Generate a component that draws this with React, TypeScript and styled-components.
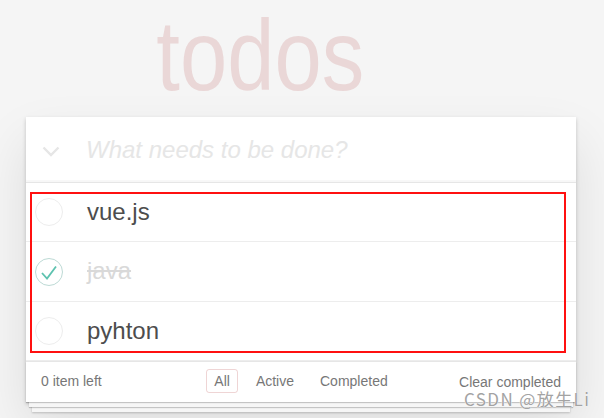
import React, { useState } from "react";
import styled, { createGlobalStyle } from "styled-components";

const GlobalStyle = createGlobalStyle`
  html, body {
    margin: 0;
    padding: 0;
    background: #f5f5f5;
    font-family: "Liberation Sans", Arial, sans-serif;
    color: #4d4d4d;
  }
`;

const Page = styled.div`
  position: relative;
  width: 604px;
  height: 418px;
  overflow: hidden;
`;

const Wrapper = styled.section`
  width: 550px;
  margin-left: 26px;
`;

const Title = styled.h1`
  margin: 0;
  padding: 5px 82px 0 0;
  height: 117px;
  box-sizing: border-box;
  text-align: center;
  font-size: 100px;
  line-height: 100px;
  font-weight: 100;
  color: rgba(175, 47, 47, 0.15);

  span {
    display: inline-block;
    transform: scaleX(0.85);
    transform-origin: center;
  }
`;

const Card = styled.div`
  position: relative;
  isolation: isolate;
  background: #fff;
  box-shadow: 0 2px 4px 0 rgba(0, 0, 0, 0.2), 0 25px 50px 0 rgba(0, 0, 0, 0.1);
`;

const Header = styled.header`
  position: relative;
  display: flex;
  align-items: center;
  height: 65px;
  box-shadow: inset 0 -2px 1px rgba(0, 0, 0, 0.03);
`;

const ToggleAll = styled.div`
  width: 60px;
  display: flex;
  padding: 3px 0 0 16px;
  box-sizing: border-box;
`;

const NewTodo = styled.input`
  flex: 1;
  border: none;
  outline: none;
  background: transparent;
  padding: 0 16px 0 0;
  font-family: "Liberation Sans", Arial, sans-serif;
  font-size: 24px;
  line-height: 1.4em;
  color: #4d4d4d;

  &::placeholder {
    font-style: italic;
    color: #e6e6e6;
  }
`;

const Main = styled.section`
  position: relative;
  border-top: 1px solid #e6e6e6;
`;

const List = styled.ul`
  margin: 0;
  padding: 0;
  list-style: none;
`;

const Item = styled.li`
  display: flex;
  align-items: center;
  height: 58.4px;
  border-bottom: 1px solid #ededed;
`;

const Toggle = styled.div`
  width: 61px;
  display: flex;
  align-items: center;
  padding-left: 8px;
  box-sizing: border-box;
`;

const Label = styled.label<{ $done: boolean }>`
  font-size: 24px;
  line-height: 1.2;
  color: ${(p) => (p.$done ? "#d9d9d9" : "#4d4d4d")};
  text-decoration: ${(p) => (p.$done ? "line-through" : "none")};
`;

const Annotation = styled.div`
  position: absolute;
  left: 4px;
  top: 9px;
  width: 536px;
  height: 161px;
  box-sizing: border-box;
  border: 2px solid #ff1010;
  pointer-events: none;
`;

const Footer = styled.footer`
  position: relative;
  display: flex;
  align-items: center;
  height: 40px;
  padding: 0 15px;
  font-size: 14px;
  color: #777;
  border-top: 1px solid #e6e6e6;

  &::before {
    content: "";
    position: absolute;
    left: 0;
    right: 0;
    bottom: 0;
    height: 40px;
    z-index: -1;
    box-shadow: 0 1px 1px rgba(0, 0, 0, 0.2), 0 8px 0 -3px #f6f6f6,
      0 9px 1px -3px rgba(0, 0, 0, 0.2), 0 16px 0 -6px #f6f6f6,
      0 17px 2px -6px rgba(0, 0, 0, 0.2);
  }
`;

const Count = styled.span`
  flex: 1;
  padding-bottom: 2px;
`;

const Filters = styled.ul`
  display: flex;
  margin: 0 0 2px;
  padding: 0;
  list-style: none;
`;

const Filter = styled.li<{ $selected: boolean }>`
  margin: 0 5px;
  padding: 3px 7px;
  line-height: 16px;
  border: 1px solid ${(p) => (p.$selected ? "rgba(175, 47, 47, 0.2)" : "transparent")};
  border-radius: 3px;
`;

const Clear = styled.span`
  flex: 1;
  text-align: right;
`;

const Watermark = styled.div`
  position: absolute;
  left: 464px;
  top: 388px;
  font-family: "Noto Sans CJK SC", "Liberation Sans", sans-serif;
  font-size: 17px;
  line-height: 22px;
  letter-spacing: 1.4px;
  color: #a3a3a3;
  text-shadow: 0 0 1px #fff, 0 0 1px #fff;
  white-space: nowrap;
`;

const Circle = ({ done }: { done: boolean }) => (
  <svg width="30" height="30" viewBox="0 0 30 30">
    <circle cx="15" cy="15" r="13.5" fill="none" stroke={done ? "#bddad5" : "#ededed"} strokeWidth="1" />
    {done && (
      <polyline points="8,16 13,21.5 22,9.5" fill="none" stroke="#5dc2af" strokeWidth="1.8" />
    )}
  </svg>
);

const todos = [
  { title: "vue.js", done: false },
  { title: "java", done: true },
  { title: "pyhton", done: false },
];

export default function App() {
  const [text, setText] = useState("");
  return (
    <Page>
      <GlobalStyle />
      <Wrapper>
        <Title>
          <span>todos</span>
        </Title>
        <Card>
          <Header>
            <ToggleAll>
              <svg width="18" height="11" viewBox="0 0 18 11">
                <polyline points="1.5,1.5 9,9 16.5,1.5" fill="none" stroke="#e6e6e6" strokeWidth="2.4" />
              </svg>
            </ToggleAll>
            <NewTodo
              placeholder="What needs to be done?"
              value={text}
              onChange={(e) => setText(e.target.value)}
            />
          </Header>
          <Main>
            <List>
              {todos.map((t) => (
                <Item key={t.title}>
                  <Toggle>
                    <Circle done={t.done} />
                  </Toggle>
                  <Label $done={t.done}>{t.title}</Label>
                </Item>
              ))}
            </List>
            <Annotation />
          </Main>
          <Footer>
            <Count>0 item left</Count>
            <Filters>
              <Filter $selected>All</Filter>
              <Filter $selected={false}>Active</Filter>
              <Filter $selected={false}>Completed</Filter>
            </Filters>
            <Clear>Clear completed</Clear>
          </Footer>
        </Card>
      </Wrapper>
      <Watermark>CSDN @放生Li</Watermark>
    </Page>
  );
}
